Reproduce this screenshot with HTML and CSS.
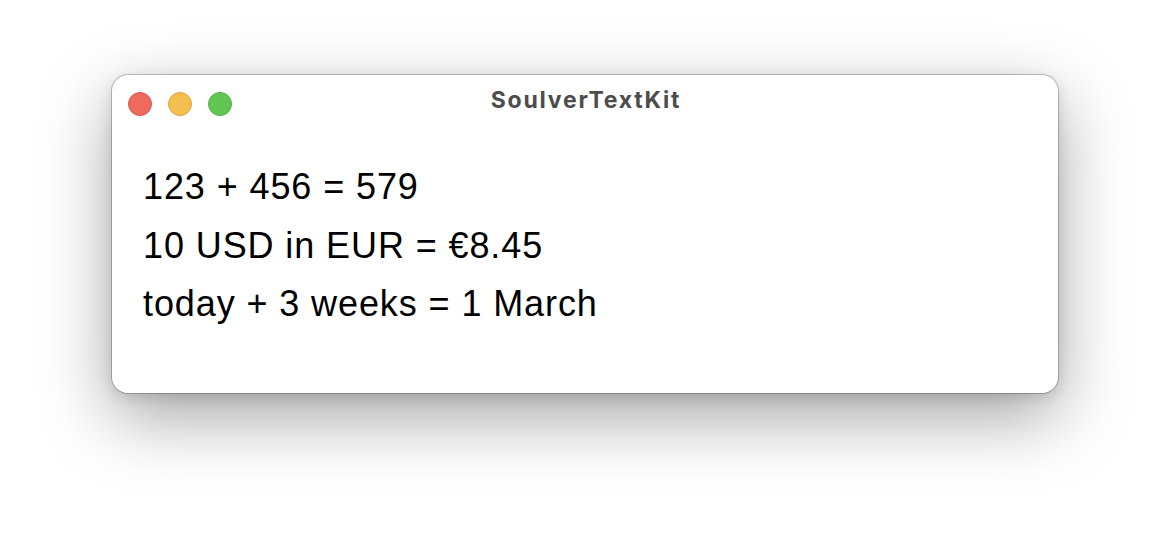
FILE: index.html
```html
<!DOCTYPE html>
<html>
<head>
<meta charset="utf-8">
<link rel="stylesheet" href="styles.css">
</head>
<body>
<div class="stage">
  <div class="window">
    <div class="titlebar">
      <div class="lights">
        <span class="light red"></span>
        <span class="light yellow"></span>
        <span class="light green"></span>
      </div>
      <div class="title">SoulverTextKit</div>
    </div>
    <div class="content">
      <div class="line">123 + 456 = 579</div>
      <div class="line">10 USD in EUR = €8.45</div>
      <div class="line">today + 3 weeks = 1 March</div>
    </div>
  </div>
</div>
</body>
</html>
```
FILE: styles.css
```css
html, body {
  margin: 0;
  padding: 0;
  background: #ffffff;
}
.stage {
  width: 1170px;
  height: 542px;
  display: flex;
  justify-content: center;
  align-items: flex-start;
  padding-top: 75px;
  box-sizing: border-box;
}
.window {
  width: 946px;
  height: 318px;
  background: #ffffff;
  border-radius: 16px;
  box-shadow: 0 0 0 1px rgba(0,0,0,0.22), 0 24px 70px rgba(0,0,0,0.36), 0 4px 14px rgba(0,0,0,0.12);
  display: flex;
  flex-direction: column;
}
.titlebar {
  height: 56px;
  box-sizing: border-box;
  padding-bottom: 6px;
  position: relative;
  display: flex;
  align-items: center;
  justify-content: center;
}
.lights {
  position: absolute;
  left: 16px;
  top: 17px;
  display: flex;
  gap: 16px;
}
.light {
  width: 24px;
  height: 24px;
  border-radius: 50%;
  box-sizing: border-box;
}
.red { background: #ee6a5f; border: 1px solid #d9534a; }
.yellow { background: #f5be4f; border: 1px solid #dea43a; }
.green { background: #62c554; border: 1px solid #4fae43; }
.title {
  font-family: Inter, "Liberation Sans", Arial, sans-serif;
  font-weight: 700;
  font-size: 23px;
  letter-spacing: 1.8px;
  color: #4d4d4d;
  margin-left: 2px;
}
.content {
  padding: 27px 0 0 31px;
  display: flex;
  flex-direction: column;
}
.line {
  font-family: "Liberation Sans", Arial, sans-serif;
  font-size: 36px;
  letter-spacing: 0.9px;
  line-height: 58.5px;
  color: #000000;
}
```
